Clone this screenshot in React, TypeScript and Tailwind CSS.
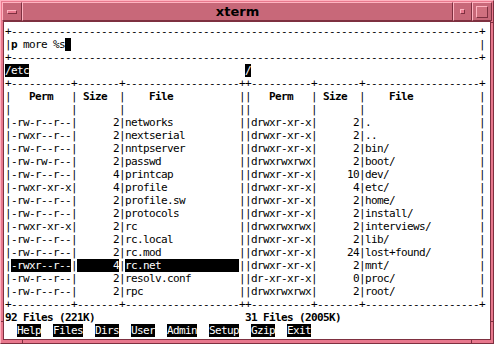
import React from 'react';

type Seg = { t: string; inv?: boolean; b?: boolean };

const hr = '+' + '-'.repeat(78) + '+';
const sep = '+----------+-------+-------------------+';
const blank = '|          |       |                   |';

const left: [string, string, string][] = [
  ['-rw-r--r--', '2', 'networks'],
  ['-rwxr--r--', '2', 'nextserial'],
  ['-rw-r--r--', '2', 'nntpserver'],
  ['-rw-rw-r--', '2', 'passwd'],
  ['-rw-r--r--', '4', 'printcap'],
  ['-rwxr-xr-x', '4', 'profile'],
  ['-rw-r--r--', '2', 'profile.sw'],
  ['-rw-r--r--', '2', 'protocols'],
  ['-rwxr-xr-x', '2', 'rc'],
  ['-rw-r--r--', '2', 'rc.local'],
  ['-rw-r--r--', '2', 'rc.mod'],
  ['-rwxr--r--', '4', 'rc.net'],
  ['-rw-r--r--', '2', 'resolv.conf'],
  ['-rw-r--r--', '2', 'rpc'],
];

const right: [string, string, string][] = [
  ['drwxr-xr-x', '2', '.'],
  ['drwxr-xr-x', '2', '..'],
  ['drwxr-xr-x', '2', 'bin/'],
  ['drwxrwxrwx', '2', 'boot/'],
  ['drwxr-xr-x', '10', 'dev/'],
  ['drwxr-xr-x', '4', 'etc/'],
  ['drwxr-xr-x', '2', 'home/'],
  ['drwxr-xr-x', '2', 'install/'],
  ['drwxrwxrwx', '2', 'interviews/'],
  ['drwxr-xr-x', '2', 'lib/'],
  ['drwxr-xr-x', '24', 'lost+found/'],
  ['drwxr-xr-x', '2', 'mnt/'],
  ['dr-xr-xr-x', '0', 'proc/'],
  ['drwxrwxrwx', '2', 'root/'],
];

const cell = (row: [string, string, string], sel: boolean): Seg[] => [
  { t: '|' },
  { t: row[0], inv: sel },
  { t: '|' },
  { t: row[1].padStart(7), inv: sel },
  { t: '|' },
  { t: row[2].padEnd(19), inv: sel },
  { t: '|' },
];

const header: Seg[] = [
  { t: '|' }, { t: '   Perm   ', b: true }, { t: '|' }, { t: ' Size  ', b: true }, { t: '|' },
  { t: '    File           ', b: true }, { t: '|' },
];

const menu = ['Help', 'Files', 'Dirs', 'User', 'Admin', 'Setup', 'Gzip', 'Exit'];

const rows: Seg[][] = [
  [{ t: hr }],
  [{ t: '|' }, { t: 'p', b: true }, { t: ' more %s' }, { t: ' ', inv: true }, { t: ' '.repeat(68) + '|' }],
  [{ t: hr }],
  [{ t: '/etc', inv: true }, { t: ' '.repeat(36) }, { t: '/', inv: true }],
  [{ t: sep + sep }],
  [...header, ...header],
  [{ t: blank + blank }],
  ...left.map((r, i) => [...cell(r, i === 11), ...cell(right[i], false)]),
  [{ t: sep + sep }],
  [{ t: '92 Files (221K)'.padEnd(40), b: true }, { t: '31 Files (2005K)', b: true }],
  [{ t: ' ' }, ...menu.flatMap((m) => [{ t: ' ' }, { t: m, inv: true }, { t: ' ' }])],
];

const bevel = 'border border-t-[#ffb3c0] border-l-[#ffb3c0] border-b-[#7e3040] border-r-[#7e3040]';

export default function App() {
  return (
    <div className={`relative w-[494px] h-[344px] bg-[#e8788d] ${bevel} p-[1px] flex flex-col`}>
      {/* frame resize notches */}
      <div className="absolute left-[21px] bottom-0 w-[1px] h-[3px] bg-[#7e3040]" />
      <div className="absolute right-[21px] bottom-0 w-[1px] h-[3px] bg-[#7e3040]" />
      <div className="absolute right-0 top-[21px] w-[3px] h-[1px] bg-[#7e3040]" />
      <div className="absolute right-0 bottom-[21px] w-[3px] h-[1px] bg-[#7e3040]" />
      <div className="absolute left-0 bottom-[21px] w-[3px] h-[1px] bg-[#7e3040]" />

      {/* title bar */}
      <div className="h-[19px] flex shrink-0">
        <div className={`w-[20px] bg-[#c86879] ${bevel} flex items-center justify-center`}>
          <div className={`w-[10px] h-[4px] bg-[#e8788d] ${bevel}`} />
        </div>
        <div
          className={`flex-1 bg-[#c86879] ${bevel} flex items-center justify-center text-[13px] font-bold text-black`}
          style={{ fontFamily: '"DejaVu Sans", sans-serif' }}
        >
          xterm
        </div>
        <div className={`w-[19px] bg-[#c86879] ${bevel} flex items-center justify-center`}>
          <div className={`w-[5px] h-[5px] bg-[#e8788d] ${bevel}`} />
        </div>
        <div className={`w-[20px] bg-[#c86879] ${bevel} flex items-center justify-center`}>
          <div className={`w-[12px] h-[12px] bg-[#d0707f] ${bevel}`} />
        </div>
      </div>

      {/* client */}
      <div className="flex-1 mx-[1px] mb-[2px] border border-[#7e3040] bg-white pt-[3px] pl-[1px] overflow-hidden">
        <div
          className="text-[11px] leading-[13px] tracking-[-0.623px] text-black whitespace-pre"
          style={{ fontFamily: '"DejaVu Sans Mono", monospace' }}
        >
          {rows.map((segs, i) => (
            <div key={i} className="h-[13px]">
              {segs.map((s, j) => (
                <span key={j} className={`${s.inv ? 'bg-black text-white' : ''} ${s.b ? 'font-bold' : ''}`}>
                  {s.t}
                </span>
              ))}
            </div>
          ))}
        </div>
      </div>
    </div>
  );
}
